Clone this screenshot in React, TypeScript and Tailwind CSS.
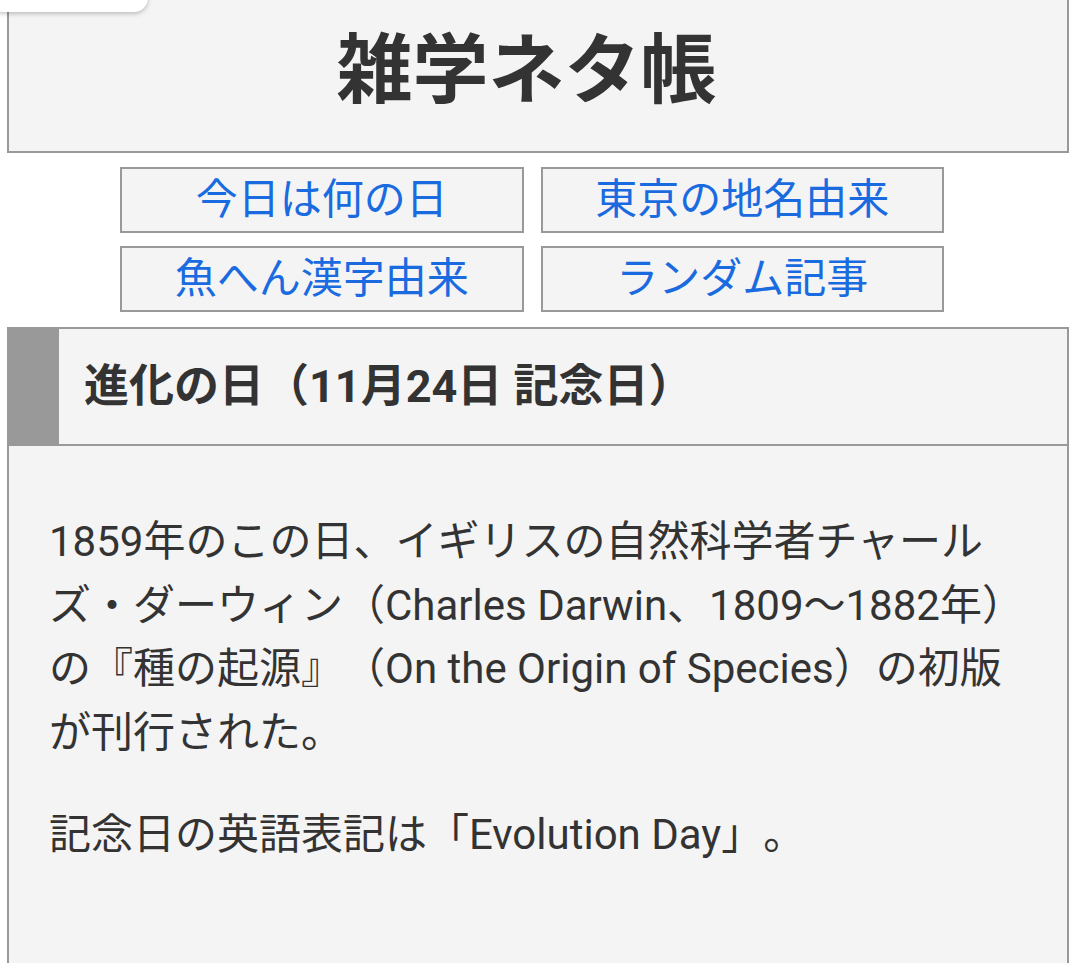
import React from 'react';

const links = ['今日は何の日', '東京の地名由来', '魚へん漢字由来', 'ランダム記事'];

const App: React.FC = () => {
  return (
    <div className="relative h-[963px] w-[1080px] overflow-hidden bg-white font-['Roboto','Noto_Sans_CJK_JP',sans-serif] text-[#333] [text-spacing-trim:space-all]">
      {/* floating tab at top left */}
      <div className="absolute -left-[10px] -top-[40px] z-10 h-[52px] w-[158px] rounded-[14px] bg-white shadow-[0_2px_4px_rgba(0,0,0,0.22)]" />

      <header className="-mt-[17px] ml-[7px] flex h-[170px] w-[1062px] items-center justify-center border-2 border-[#999] bg-[#f4f4f4] pt-[6px]">
        <h1 className="pr-[23px] text-[76px] font-bold leading-none">雑学ネタ帳</h1>
      </header>

      <nav className="ml-[120px] mt-[14px] grid w-[824px] grid-cols-2 gap-x-[17px] gap-y-[13px]">
        {links.map((label) => (
          <a
            key={label}
            href="#"
            className="flex h-[66px] items-center justify-center border-2 border-[#999] bg-[#f4f4f4] text-[42px] leading-none text-[#1a6be0]"
          >
            {label}
          </a>
        ))}
      </nav>

      <section className="ml-[7px] mt-[15px] w-[1062px] border-2 border-[#999] bg-[#f4f4f4]">
        <h2 className="flex h-[117px] items-center border-b-2 border-l-[50px] border-[#999] pl-[25px] text-[45px] font-bold leading-none">
          進化の日（11月24日 記念日）
        </h2>
        <div className="pb-[140px] pl-[40px] pr-[41px] pt-[64px] text-[42px] leading-[63.7px]">
          <p>
            1859年のこの日、イギリスの自然科学者チャールズ・ダーウィン（Charles Darwin、1809〜1882年）の『種の起源』（On the Origin of Species）の初版が刊行された。
          </p>
          <p className="mt-[38px]">記念日の英語表記は「Evolution Day」。</p>
        </div>
      </section>
    </div>
  );
};

export default App;
